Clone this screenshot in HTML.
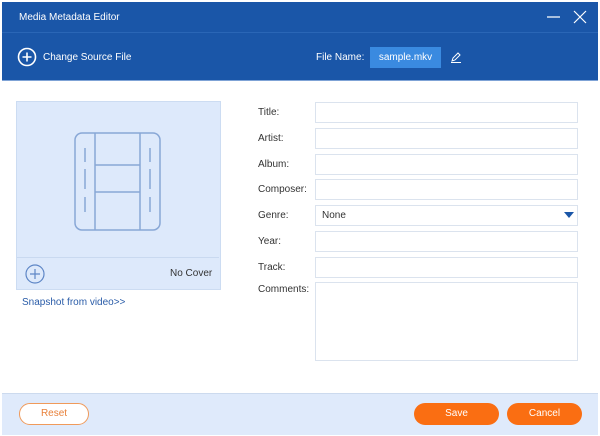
<!DOCTYPE html><html><head><style>
body{margin:0;width:600px;height:436px;background:#fff;font-family:"Liberation Sans",sans-serif;font-size:10px;position:relative;overflow:hidden}
.a{position:absolute}
.f{position:absolute;left:315px;width:261px;height:19px;border:1px solid #dbe3ee;background:#fff}
.l{position:absolute;left:258px;color:#333}
</style></head><body>
<div class="a" style="left:2px;top:2px;width:596px;height:78px;background:#1a56a8"></div>
<div class="a" style="left:2px;top:32px;width:596px;height:1px;background:#2a66b6"></div>
<div class="a" style="left:2px;top:80px;width:596px;height:1px;background:#7fa3d6"></div>
<div class="a" style="left:19px;top:12px;color:#fff">Media Metadata Editor</div>
<svg class="a" style="left:540px;top:8px" width="52" height="18"><path d="M7 9H20M34 3L46 15M46 3L34 15" stroke="#fff" stroke-width="1.2" fill="none"/></svg>
<svg class="a" style="left:16px;top:46px" width="22" height="22"><circle cx="11" cy="11" r="8.5" stroke="#fff" stroke-width="1.6" fill="none"/><path d="M11 6.5V15.5M6.5 11H15.5" stroke="#fff" stroke-width="1.6"/></svg>
<div class="a" style="left:43px;top:52px;color:#fff">Change Source File</div>
<div class="a" style="left:316px;top:52px;color:#fff">File Name:</div>
<div class="a" style="left:370px;top:47px;width:71px;height:21px;background:#3a8ae0;color:#fff;line-height:21px;text-align:center">sample.mkv</div>
<svg class="a" style="left:450px;top:51px" width="12" height="12"><path d="M2 10L3 7L8 2L10 4L5 9ZM1 11.5H11" stroke="#fff" stroke-width="1" fill="none"/></svg>
<div class="a" style="left:16px;top:101px;width:203px;height:187px;background:#dde9fb;border:1px solid #ccdcf2"></div>
<div class="a" style="left:17px;top:257px;width:202px;height:1px;background:#c9d9f0"></div>
<svg class="a" style="left:74px;top:132px" width="88" height="100" fill="none" stroke="#88a7d6" stroke-width="1.5"><rect x="1" y="1" width="85" height="97" rx="7"/><path d="M21 1V98M66 1V98M21 33H66M21 60H66M11 16V30M11 37V57M11 65V80M76 16V30M76 37V57M76 65V80"/></svg>
<svg class="a" style="left:24px;top:263px" width="22" height="22"><circle cx="11" cy="11" r="9" stroke="#5e86c6" stroke-width="1.2" fill="none"/><path d="M11 6V16M6 11H16" stroke="#5e86c6" stroke-width="1.2"/></svg>
<div class="a" style="left:170px;top:268px;color:#333">No Cover</div>
<div class="a" style="left:22px;top:297px;color:#2a5ca8">Snapshot from video&gt;&gt;</div>
<div class="l" style="top:107px">Title:</div><div class="f" style="top:102px"></div>
<div class="l" style="top:133px">Artist:</div><div class="f" style="top:128px"></div>
<div class="l" style="top:159px">Album:</div><div class="f" style="top:154px"></div>
<div class="l" style="top:184px">Composer:</div><div class="f" style="top:179px"></div>
<div class="l" style="top:210px">Genre:</div><div class="f" style="top:205px"><span class="a" style="left:6px;top:4px;color:#333">None</span><svg class="a" style="left:248px;top:6px" width="10" height="7"><path d="M0 0H10L5 6Z" fill="#1a56a8"/></svg></div>
<div class="l" style="top:236px">Year:</div><div class="f" style="top:231px"></div>
<div class="l" style="top:262px">Track:</div><div class="f" style="top:257px"></div>
<div class="l" style="top:284px">Comments:</div><div class="f" style="top:282px;height:77px"></div>
<div class="a" style="left:2px;top:393px;width:596px;height:41px;background:#dfeafb;border-top:1px solid #ccdaee"></div>
<div class="a" style="left:19px;top:403px;width:68px;height:20px;border:1px solid #f09a5a;border-radius:11px;color:#e8803a;text-align:center;line-height:20px;background:#fff">Reset</div>
<div class="a" style="left:414px;top:403px;width:85px;height:22px;background:#fa6e12;border-radius:11px;color:#fff;text-align:center;line-height:22px">Save</div>
<div class="a" style="left:507px;top:403px;width:75px;height:22px;background:#fa6e12;border-radius:11px;color:#fff;text-align:center;line-height:22px">Cancel</div>
</body></html>
